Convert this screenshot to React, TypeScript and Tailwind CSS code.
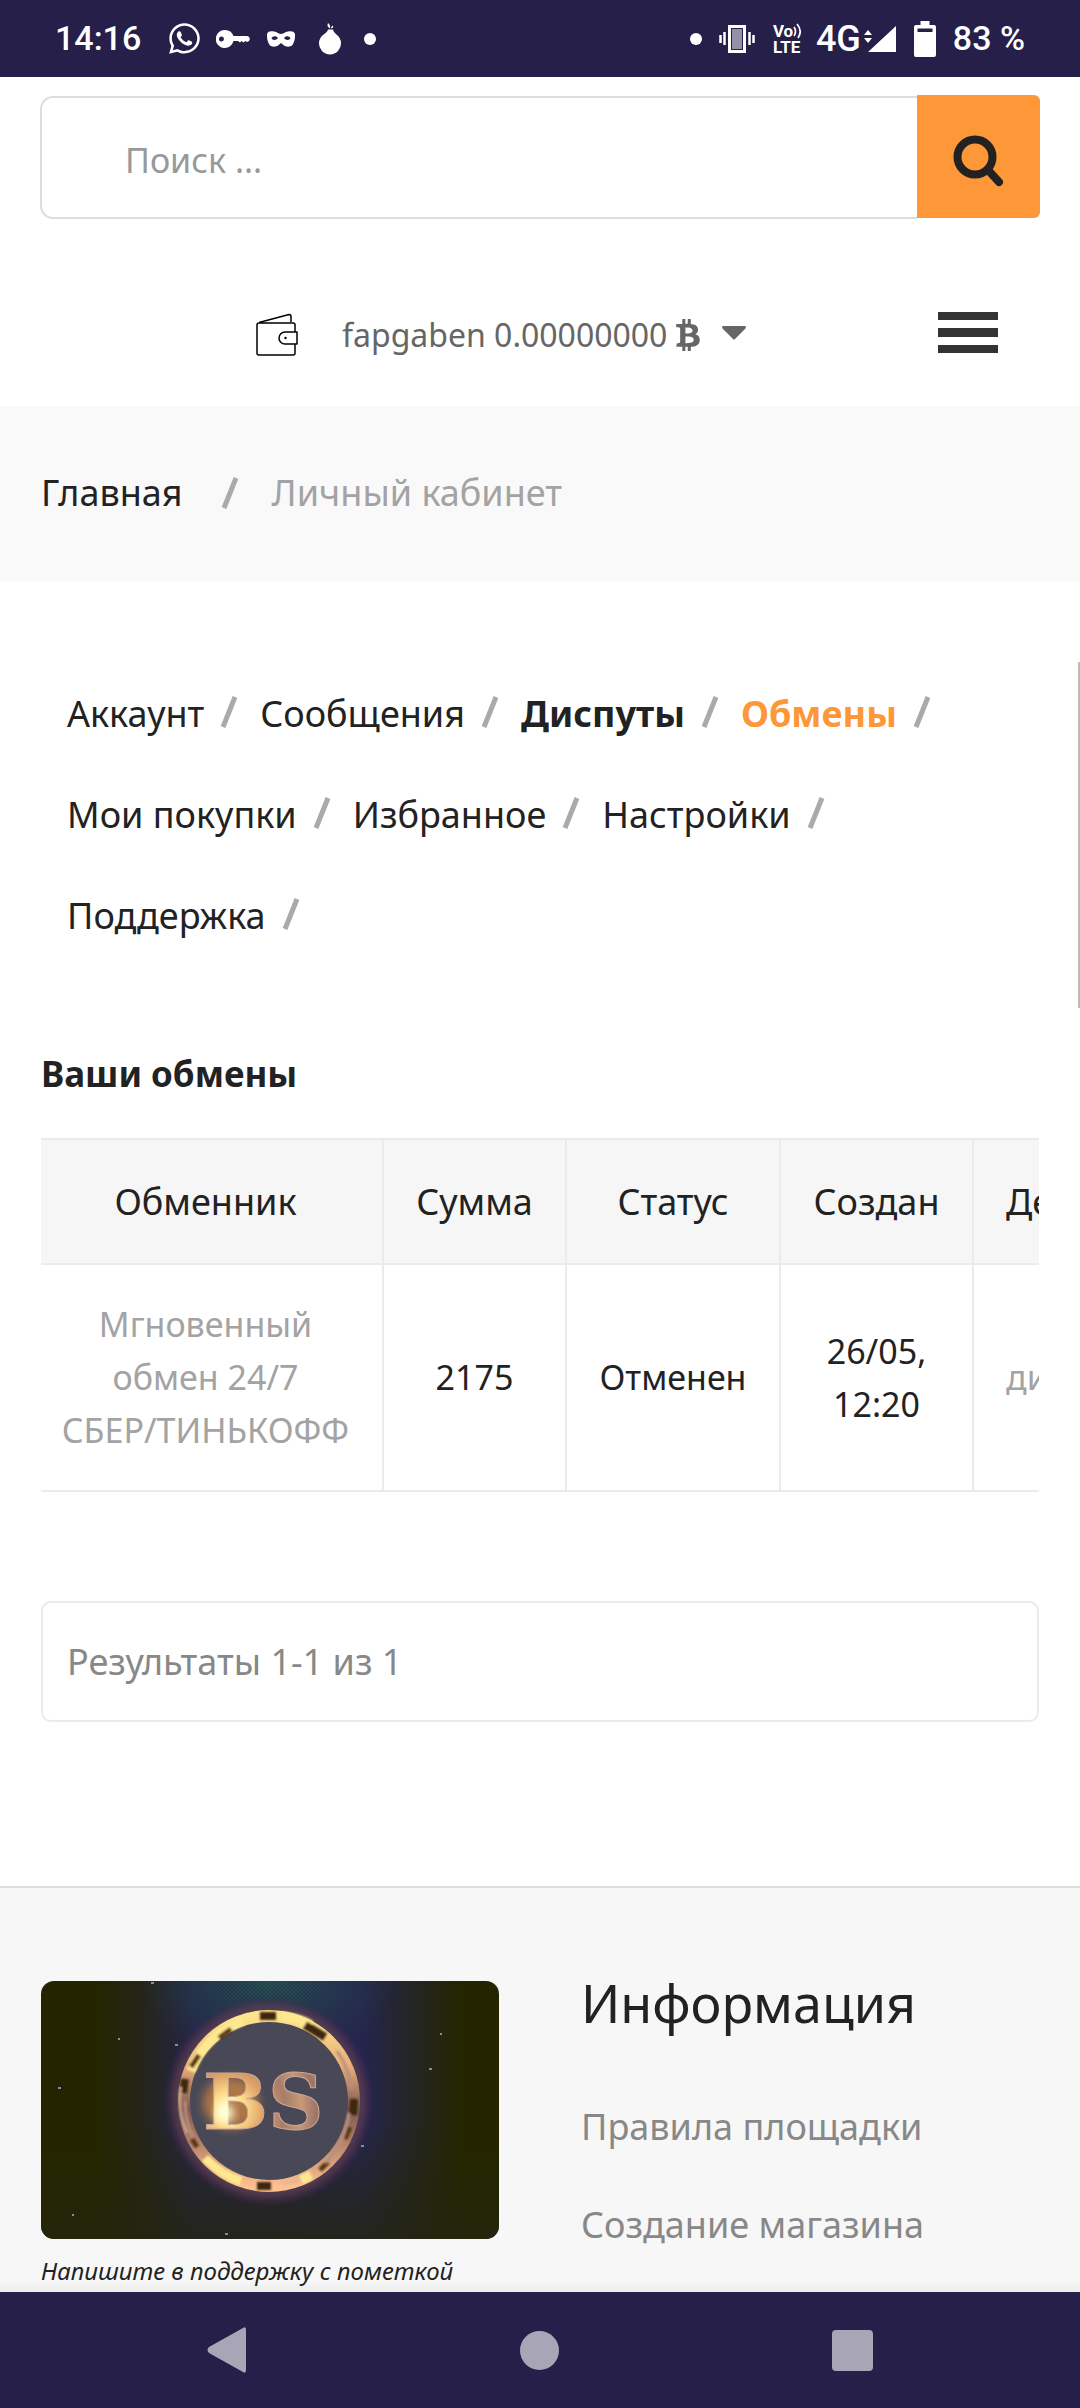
import React from "react";
import { FaBtc, FaWhatsapp } from "react-icons/fa";

const accountLinks = [
  { label: "Аккаунт", style: "font-normal text-[#222]" },
  { label: "Сообщения", style: "font-normal text-[#222]" },
  { label: "Диспуты", style: "font-bold text-[#222]" },
  { label: "Обмены", style: "font-bold text-[#fd9738]" },
  { label: "Мои покупки", style: "font-normal text-[#222]" },
  { label: "Избранное", style: "font-normal text-[#222]" },
  { label: "Настройки", style: "font-normal text-[#222]" },
  { label: "Поддержка", style: "font-normal text-[#222]" },
];

function Slash() {
  return (
    <svg aria-hidden="true" className="h-8 w-[18px] shrink-0" viewBox="0 0 18 32">
      <path d="M15 1 3 31" stroke="#aaa" strokeWidth="5" />
    </svg>
  );
}

function StatusBar() {
  return (
    <div className="flex h-[77px] shrink-0 items-center justify-between bg-[#261f4a] px-[55px] font-[Roboto,sans-serif] text-[34px] font-medium text-white">
      <div className="flex items-center">
        <span className="w-[112px]">14:16</span>
        <FaWhatsapp className="size-[35px]" />
        <svg aria-hidden="true" className="ml-[14px] h-[18px] w-[34px]" viewBox="0 0 34 18">
          <path
            fill="#fff"
            fillRule="evenodd"
            d="M9 0a9 9 0 0 1 8.500 6H31a3 3 0 0 1 2 5l-2 1-1.500-1-2 1.500-2-1.500-1.500 1.500-2-1.500H17.500A9 9 0 1 1 9 0ZM5.500 6.500a2.500 2.500 0 1 0 0 5 2.500 2.500 0 0 0 0-5Z"
          />
        </svg>
        <svg aria-hidden="true" className="ml-[17px] h-4 w-7" viewBox="0 0 28 16">
          <path
            fill="#fff"
            fillRule="evenodd"
            d="M0 3C1 0 4 0 7 .5c3 .5 5 2.500 7 2.500s4-2 7-2.500c3-.5 6-.5 7 2.500.3 5-1 9-3 11.500-2 1.500-6 1.500-8 0L14 12l-3 2.500c-2 1.500-6 1.500-8 0C1 12-.3 8 0 3Zm4.500 4.500C5.500 9.500 9.500 9.500 11 7 9 4.500 5.500 5 4.500 7.500Zm12.500-.5c1.500 2.500 5.500 2.500 6.500.5C22.500 5 19 4.500 17 7Z"
          />
        </svg>
        <svg aria-hidden="true" className="ml-[23px] h-8 w-6" viewBox="0 0 24 32">
          <path fill="#fff" d="M10 6.500h5c.5 2 1.500 3.500 4 5.500a11 11 0 1 1-14 0c3-2 4.500-3.500 5-5.500Z" />
          <path fill="#fff" d="M10 0c2 1.500 2.500 3 2 5.500C9.500 4 9 2.500 10 0ZM15 2.500c.5 1.500 0 2.500-2 3 0-1.500.5-2.500 2-3Z" />
        </svg>
        <span className="ml-[22px] size-3 rounded-full bg-white" />
      </div>
      <div className="flex items-center">
        <span className="size-3 rounded-full bg-white" />
        <svg aria-hidden="true" className="ml-[17px] h-[30px] w-9" viewBox="0 0 36 30">
          <rect x="10.500" y="2.500" width="15" height="25" fill="#9590a7" stroke="#fff" strokeWidth="3" />
          <rect x="12.500" y="4.500" width="11" height="21" fill="none" stroke="#261f4a" />
          <path d="M1.500 11v8M5.500 8v13M30.500 8v13M34.500 11v8" stroke="#fff" strokeWidth="2.500" />
        </svg>
        <div className="ml-[18px] flex w-[31px] flex-col text-[17px] leading-4 font-bold">
          <span className="flex items-start">
            Vo
            <svg aria-hidden="true" className="h-4 w-[10px] shrink-0" viewBox="0 0 10 16">
              <path d="M1 4c2 2.500 2 6.500 0 9M4 1c4 4.500 4 9.500 1 14" fill="none" stroke="#fff" strokeWidth="1.800" />
            </svg>
          </span>
          <span>LTE</span>
        </div>
        <span className="ml-3 text-[36px] leading-10">4G</span>
        <svg aria-hidden="true" className="ml-[3px] h-[26px] w-8" viewBox="0 0 32 26">
          <path d="M32 0v26H4ZM0 9l4-5 4 5ZM0 12h8l-4 5Z" fill="#fff" />
        </svg>
        <svg aria-hidden="true" className="ml-[18px] h-9 w-[22px]" viewBox="0 0 22 36">
          <path
            fill="#fff"
            fillRule="evenodd"
            d="M6.500 0h9v4H20a2 2 0 0 1 2 2v28a2 2 0 0 1-2 2H2a2 2 0 0 1-2-2V6a2 2 0 0 1 2-2h4.500ZM3.500 7.500v3.500h15V7.500Z"
          />
        </svg>
        <span className="ml-[17px]">83 %</span>
      </div>
    </div>
  );
}

function Header() {
  return (
    <header className="px-10 pt-[18px]">
      <form className="flex items-start" role="search" onSubmit={(e) => e.preventDefault()}>
        <input
          type="text"
          aria-label="Поиск"
          placeholder="Поиск ..."
          className="mt-px h-[123px] min-w-0 flex-1 rounded-l-[13px] border-2 border-r-0 border-[#ddd] bg-white pt-1 pl-[83px] text-[34px] text-[#222] outline-none placeholder:text-[#999]"
        />
        <button
          type="submit"
          aria-label="Найти"
          className="flex size-[123px] items-center justify-center rounded-r-md bg-[#fd9738] pt-2"
        >
          <svg aria-hidden="true" className="size-[52px]" viewBox="0 0 52 52" fill="none" stroke="#222">
            <circle cx="22" cy="22" r="17.500" strokeWidth="8" />
            <path d="m35 35 11 12" strokeWidth="8" strokeLinecap="round" />
          </svg>
        </button>
      </form>
      <div className="flex h-[187px] items-center pt-11 pl-[216px]">
        <svg
          aria-hidden="true"
          className="h-11 w-[42px] shrink-0"
          viewBox="0 0 42 44"
          fill="none"
          stroke="#000"
          strokeWidth="1.500"
          strokeLinejoin="round"
        >
          <path d="M39 31v9q0 2-2 2H3q-2 0-2-2V12q0-2 2-2h34q2 0 2 2v7M3 9.500 33 1.500q2 0 2 2V9" />
          <path d="M41 19H29a6 6 0 0 0 0 12h12Z" />
          <circle cx="29.500" cy="25" r=".5" />
        </svg>
        <button type="button" className="ml-[44px] flex items-center text-[32px] whitespace-nowrap text-[#666]">
          fapgaben 0.00000000
          <FaBtc className="ml-[9px] h-8 w-6" />
          <svg aria-hidden="true" className="mb-1 ml-[22px] h-[14px] w-6" viewBox="0 0 24 14">
            <path d="M1 0h22q2 1 0 3L13 13q-1 1-2 0L1 3q-2-2 0-3Z" fill="#666" />
          </svg>
        </button>
        <button type="button" aria-label="Меню" className="mr-[42px] mb-1 ml-auto flex w-[60px] flex-col gap-2">
          <span className="h-2 w-full bg-[#333]" />
          <span className="h-[9px] w-full bg-[#333]" />
          <span className="h-2 w-full bg-[#333]" />
        </button>
      </div>
    </header>
  );
}

function ExchangeTable() {
  const head = "border-y-2 border-r-2 border-[#ebebeb] px-2 py-0 font-normal";
  const cell = "border-r-2 border-b-2 border-[#ebebeb] px-2";
  return (
    <div className="overflow-x-hidden">
      <table className="w-[1134px] table-fixed border-collapse text-center">
        <colgroup>
          <col className="w-[342px]" />
          <col className="w-[183px]" />
          <col className="w-[214px]" />
          <col className="w-[193px]" />
          <col className="w-[202px]" />
        </colgroup>
        <thead>
          <tr className="h-[125px] bg-[#f6f6f6] text-[36px] text-[#222]">
            <th className="border-y-2 border-r-2 border-[#ebebeb] pr-5 pl-2 font-normal">Обменник</th>
            <th className={head}>Сумма</th>
            <th className={head}>Статус</th>
            <th className={head}>Создан</th>
            <th className="border-y-2 border-[#ebebeb] pl-8 text-left font-normal">Детали</th>
          </tr>
        </thead>
        <tbody>
          <tr className="h-[227px] text-[34px] leading-[53px] text-[#222]">
            <td className="border-r-2 border-b-2 border-[#ebebeb] pr-5 pl-2">
              <a href="#exchanger" className="text-[#a3a3a3]">
                Мгновенный
                <br />
                обмен 24/7
                <br />
                СБЕР/ТИНЬКОФФ
              </a>
            </td>
            <td className={cell}>2175</td>
            <td className={cell}>Отменен</td>
            <td className={cell}>
              26/05,
              <br />
              12:20
            </td>
            <td className="border-b-2 border-[#ebebeb] pl-8 text-left">
              <a href="#dispute" className="text-[#a3a3a3]">
                диспут
              </a>
            </td>
          </tr>
        </tbody>
      </table>
    </div>
  );
}

function Emblem() {
  return (
    <svg
      role="img"
      aria-label="BS"
      className="block h-[258px] w-[458px] rounded-[13px]"
      viewBox="0 0 458 258"
      preserveAspectRatio="xMidYMid slice"
    >
      <defs>
        <linearGradient id="night">
          <stop offset=".12" stopColor="#242500" />
          <stop offset=".22" stopColor="#24251c" />
          <stop offset=".33" stopColor="#242550" />
          <stop offset=".7" stopColor="#242558" />
          <stop offset=".82" stopColor="#242526" />
          <stop offset=".92" stopColor="#242500" />
        </linearGradient>
        <linearGradient id="dusk" x2="0" y2="1">
          <stop offset=".55" stopColor="#242500" stopOpacity="0" />
          <stop offset="1" stopColor="#242510" stopOpacity=".75" />
        </linearGradient>
        <radialGradient id="teal">
          <stop offset="0" stopColor="#24505c" />
          <stop offset="1" stopColor="#24485a" stopOpacity="0" />
        </radialGradient>
        <radialGradient id="halo">
          <stop offset=".82" stopColor="#4a4a56" />
          <stop offset=".9" stopColor="#5c3850" stopOpacity=".7" />
          <stop offset="1" stopColor="#3c2458" stopOpacity="0" />
        </radialGradient>
        <radialGradient id="flare" gradientUnits="userSpaceOnUse" cx="188" cy="128" r="112">
          <stop offset="0" stopColor="#ffffe0" />
          <stop offset=".14" stopColor="#ffe08c" />
          <stop offset=".3" stopColor="#e0a468" />
          <stop offset=".5" stopColor="#a87c68" />
          <stop offset=".65" stopColor="#c89878" />
          <stop offset=".78" stopColor="#9c7468" />
          <stop offset="1" stopColor="#f0b088" />
        </radialGradient>
        <linearGradient id="gold" x2="0" y2="1">
          <stop offset="0" stopColor="#ffe48c" />
          <stop offset=".3" stopColor="#e8ac78" />
          <stop offset=".55" stopColor="#7c5850" />
          <stop offset=".75" stopColor="#b88468" />
          <stop offset="1" stopColor="#ffc090" />
        </linearGradient>
        <pattern id="dots" width="4" height="4" patternUnits="userSpaceOnUse">
          <path d="M0 0h2v2H0ZM2 2h2v2H2Z" fill="#242500" fillOpacity=".25" />
        </pattern>
        <filter id="glow" x="-30%" y="-30%" width="160%" height="160%">
          <feGaussianBlur stdDeviation="5" />
        </filter>
        <filter id="soft">
          <feGaussianBlur stdDeviation="1.200" />
        </filter>
      </defs>
      <rect width="458" height="258" fill="url(#night)" />
      <ellipse cx="228" cy="0" rx="130" ry="80" fill="url(#teal)" />
      <rect width="458" height="258" fill="url(#dusk)" />
      <rect x="65" width="350" height="258" fill="url(#dots)" />
      <circle cx="228" cy="120" r="106" fill="url(#halo)" />
      <circle cx="228" cy="120" r="80" fill="#484856" />
      <g fill="none">
        <circle cx="228" cy="120" r="85" stroke="url(#gold)" strokeWidth="12" />
        <g filter="url(#soft)">
          <path d="M202 40q-38 14-52 50M240 35q20 2 30 9M164 177q16 17 36 23M260 199l10-5" stroke="#ffe98f" strokeWidth="9" />
          <path d="M219 35h16M264 44l20 12M144 98l-2 14M313 118l-1 16M216 205h14" stroke="#3c2810" strokeWidth="8" />
          <path d="M190 48l-12 9M156 166l-5-8M287 181l-8 8M304 158l5-12M150 86l8-12" stroke="#583818" strokeWidth="5" />
          <path d="M296 70q12 18 15 38M144 120q0 20 8 36M308 132q-4 30-24 50" stroke="#b89080" strokeWidth="3" />
          <path d="M140 106q-4 24 6 46M242 203l16-3" stroke="#e0b49c" strokeWidth="2" />
        </g>
      </g>
      <ellipse cx="190" cy="122" rx="28" ry="26" fill="#ff9a38" fillOpacity=".55" filter="url(#glow)" />
      <text
        x="162"
        y="148"
        fontFamily="'DejaVu Serif', serif"
        fontWeight="700"
        fontSize="77"
        fill="url(#flare)"
        stroke="#c8a898"
        strokeWidth="1"
      >
        BS
      </text>
      <circle cx="184" cy="132" r="9" fill="#ffffd8" filter="url(#glow)" />
      <path d="M110 2h3M77 58h2M134 64h3M17 107h3M388 88h3M320 165h3M31 234h2M184 253h3M399 53h2" stroke="#8888a0" strokeWidth="2" />
    </svg>
  );
}

function Footer() {
  return (
    <footer className="flex flex-1 border-t-2 border-[#ddd] bg-[linear-gradient(to_top,#ececee,#f7f7f7_12px)] px-[41px]">
      <div className="w-[458px] shrink-0 pt-[93px]">
        <Emblem />
        <p className="pt-4 text-[24px] leading-8 whitespace-nowrap text-[#222] italic">
          Напишите в поддержку с пометкой
        </p>
      </div>
      <div className="min-w-0 pt-20 pl-[82px]">
        <h2 className="text-[52px] leading-[70px] text-[#222]">Информация</h2>
        <ul className="pt-10 text-[36px] leading-[98px] text-[#888]">
          <li>
            <a href="#rules">Правила площадки</a>
          </li>
          <li className="-mb-9">
            <a href="#shop">Создание магазина</a>
          </li>
        </ul>
      </div>
    </footer>
  );
}

function SystemNav() {
  return (
    <nav aria-label="Система" className="flex h-[116px] shrink-0 items-center justify-between bg-[#261f4a] px-[207px]">
      <button type="button" aria-label="Назад">
        <svg className="h-[46px] w-10" viewBox="0 0 40 46">
          <path d="M36 1q3-2 3 2v40q0 4-3 2L2 26q-3-3 0-6Z" fill="#a8a5b6" />
        </svg>
      </button>
      <button type="button" aria-label="Домой" className="size-[39px] rounded-full bg-[#a8a5b6]" />
      <button type="button" aria-label="Недавние" className="size-[41px] rounded-[4px] bg-[#a8a5b6]" />
    </nav>
  );
}

export default function App() {
  return (
    <div className="relative flex min-h-screen flex-col overflow-x-hidden bg-white font-['Noto_Sans',sans-serif] text-[#222]">
      <StatusBar />
      <Header />
      <nav aria-label="Навигация" className="flex h-[175px] items-center bg-[#f9f9f9] px-[41px] pb-[2px] text-[36px]">
        <a href="#home">Главная</a>
        <span className="mr-[33px] ml-[38px] flex">
          <Slash />
        </span>
        <span className="text-[#a3a3a3]">Личный кабинет</span>
      </nav>
      <main className="px-[41px] pb-[164px]">
        <ul className="flex flex-wrap pt-[82px] pl-[26px] text-[36px] leading-[101px]">
          {accountLinks.map((link) => (
            <li key={link.label} className="flex items-center pr-[22px]">
              <a href="#account" className={link.style}>
                {link.label}
              </a>
              <span className="mb-1 ml-4 flex">
                <Slash />
              </span>
            </li>
          ))}
        </ul>
        <h1 className="pt-[83px] pb-[39px] text-[35px] leading-[50px] font-bold">Ваши обмены</h1>
        <ExchangeTable />
        <p className="mt-[109px] rounded-[10px] border-2 border-[#ebebeb] px-6 text-[36px] leading-[117px] text-[#888]">
          Результаты 1-1 из 1
        </p>
      </main>
      <Footer />
      <SystemNav />
      <div className="absolute top-[662px] right-0 h-[346px] w-[2px] bg-[#bbb]" />
    </div>
  );
}
